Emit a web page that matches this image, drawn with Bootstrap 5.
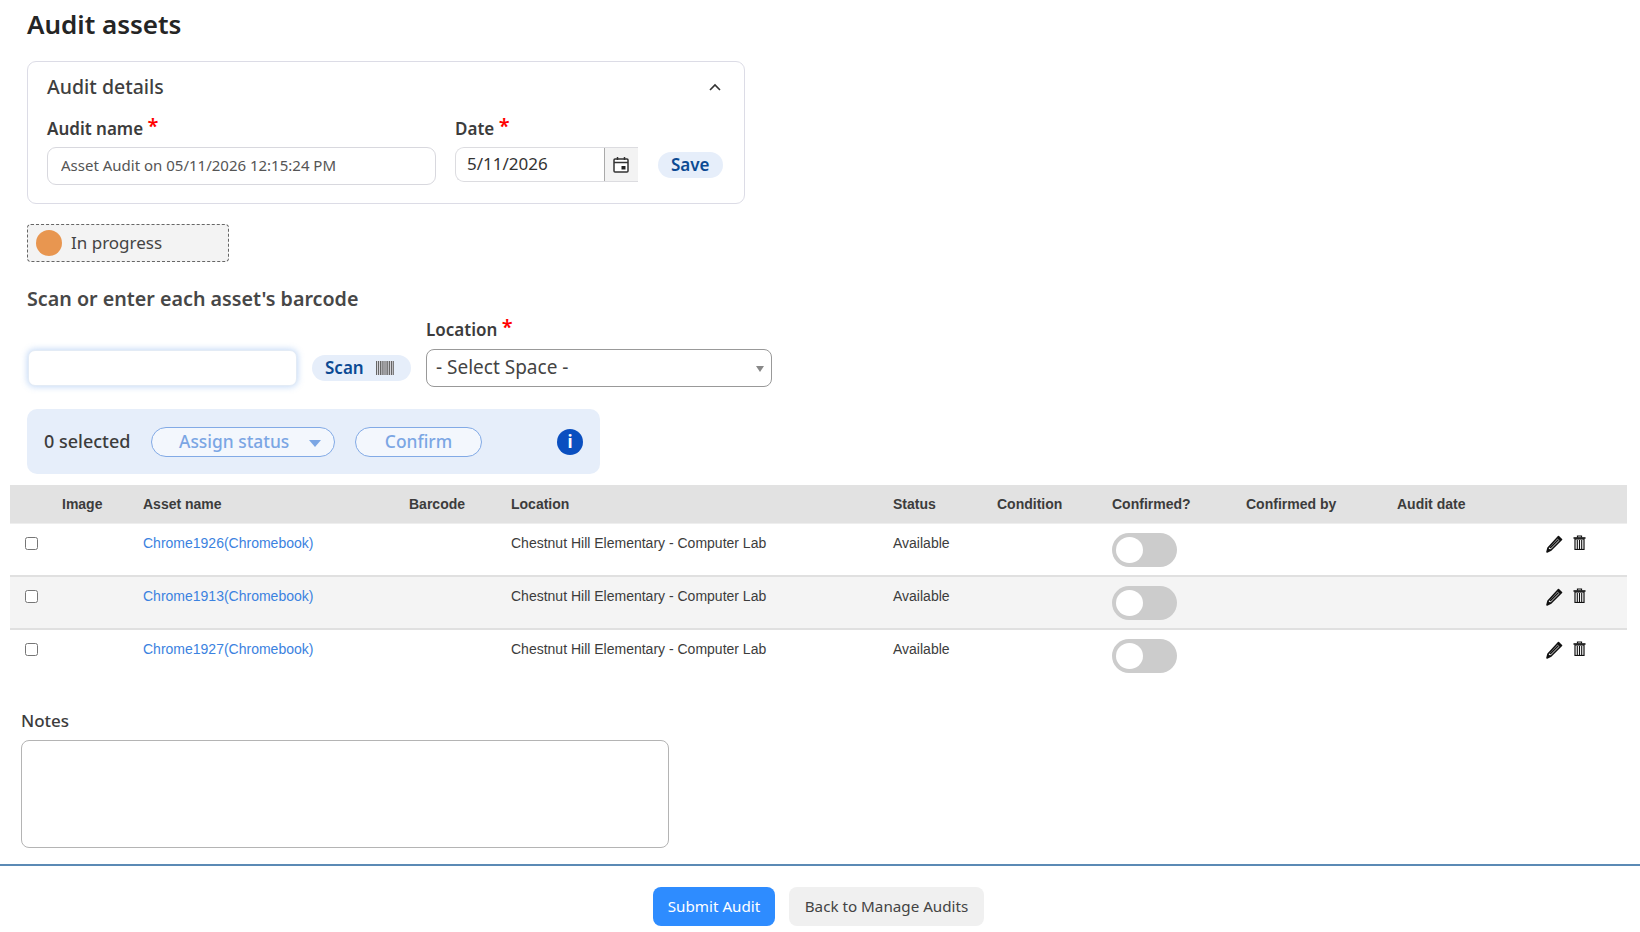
<!DOCTYPE html>
<html lang="en">
<head>
    <meta charset="UTF-8">
    <meta name="viewport" content="width=device-width, initial-scale=1.0">
    <title>Audit assets</title>
    <link href="https://cdn.jsdelivr.net/npm/bootstrap@5.3.0/dist/css/bootstrap.min.css" rel="stylesheet">
    <style>
        body { font-family: "Noto Sans", sans-serif; color: #3c3c3c; background: #fff; height: 932px; overflow: hidden; }
        .audit-top { padding: 0 27px; width: 800px; }
        .audit-title { font-size: 26px; font-weight: 600; line-height: 34px; margin: 7px 0 20px; color: #252525; }
        .details-box { width: 718px; height: 143px; border: 1px solid #dcdce6; border-radius: 9px; padding: 10px 19px 0; }
        .details-head { font-size: 19.5px; font-weight: 500; line-height: 30px; color: #3f3f3f; height: 30px; }
        .details-fields { margin-top: 15px; }
        .field-lbl { font-size: 17px; font-weight: 600; line-height: 24px; color: #3c3c3c; margin: 0; }
        .field-lbl-gap { margin-bottom: 6px; }
        .req { color: #f00; font-size: 20px; line-height: 16px; position: relative; top: -2px; }
        .name-field { width: 389px; }
        .name-input { height: 38px; border: 1px solid #d8d8de; border-radius: 9px; padding: 0 13px 2px; font-size: 15px; color: #555; font-family: inherit; }
        .date-field { width: 183px; margin-left: 19px; }
        .date-wrap { height: 35px; border: 1px solid #dcdce0; border-radius: 9px 0 0 9px; border-right: 0; display: flex; overflow: hidden; }
        .date-text { width: 149px; font-size: 17px; padding-left: 11px; line-height: 32px; color: #333; }
        .cal-btn { width: 34px; padding-right: 2px; background: #f3f3f3; border-left: 1px solid #aaa; display: flex; align-items: center; justify-content: center; }
        .pill-soft { background: #e6eefa; color: #0b4a93; font-size: 17px; font-weight: 600; border: 0; border-radius: 14px; height: 26px; line-height: 26px; padding: 0 13px; }
        .save-btn { margin-left: 20px; margin-bottom: 7px; }
        .status-chip { width: 202px; height: 38px; margin-top: 20px; border: 1px dashed #666; border-radius: 4px; background: #f3f3f3; padding-left: 8px; gap: 9px; font-size: 17px; color: #444; }
        .status-dot { width: 26px; height: 26px; border-radius: 50%; background: #e89650; }
        .scan-title { font-size: 19.7px; font-weight: 600; line-height: 26px; color: #474747; margin: 24px 0 0; }
        .scan-row { height: 75px; margin-bottom: 22px; }
        .scan-input { width: 269px; height: 36px; margin: 38px 15px 0 1px; border: 1px solid #e3ebf5; border-radius: 7px; box-shadow: 0 0 6px 1px rgba(90,150,230,.35); background: #fff; }
        .scan-btn { width: 99px; margin: 43px 15px 0 0; padding: 0 13px; display: flex; align-items: center; justify-content: space-between; }
        .scan-bars { margin-right: 4px; }
        .loc-field { width: 346px; }
        .loc-lbl { height: 37px; line-height: 36px; }
        .loc-select { height: 38px; border: 1px solid #999; border-radius: 8px; padding: 0 7px 2px 9px; font-size: 19px; color: #444; }
        .tri { width: 0; height: 0; border-left: 4px solid transparent; border-right: 4px solid transparent; border-top: 6px solid #888; position: relative; top: 2px; }
        .bulk-bar { width: 573px; height: 65px; background: #e6eefa; border-radius: 10px; padding: 0 17px; }
        .bulk-count { font-size: 18px; font-weight: 500; color: #3c3c3c; width: 107px; }
        .pill-line { height: 30px; border: 1px solid #82aae6; border-radius: 15px; background: #f3f7fd; color: #7ba6e4; font-size: 17.4px; font-weight: 500; line-height: 27px; }
        .pill-assign { width: 184px; padding: 0 13px 0 27px; margin-right: 20px; }
        .pill-confirm { width: 127px; text-align: center; }
        .tri-blue { border-top-color: #7ba6e4; border-left-width: 6px; border-right-width: 6px; border-top-width: 7px; }
        .info-dot { width: 26px; height: 26px; border-radius: 50%; background: #0a4fc0; color: #fff; font-weight: 700; font-size: 17px; line-height: 26px; text-align: center; margin-left: auto; }
        .audit-grid { width: 1617px; margin: 11px 0 0 10px; table-layout: fixed; font-family: "Liberation Sans", sans-serif; font-size: 14px; color: #3c3c3c; }
        .audit-grid th, .audit-grid td { padding: 0; border: 0; box-shadow: none; background: transparent; color: inherit; }
        .audit-grid th { height: 38px; padding-top: 2px; background: #e2e2e2; font-weight: 700; vertical-align: middle; border-bottom: 1px solid #eee; }
        .audit-grid td { height: 53px; vertical-align: top; padding-top: 10px; border-bottom: 2px solid #e0e0e0; line-height: 18px; }
        .audit-grid tbody tr:nth-child(2) td { background: #f4f4f4; }
        .audit-grid tbody tr:last-child td { border-bottom: 0; }
        .c-chk { width: 52px; padding-left: 15px !important; }
        .c-img { width: 81px; }
        .c-name { width: 266px; }
        .c-bar { width: 102px; }
        .c-loc { width: 382px; }
        .c-st { width: 104px; }
        .c-cond { width: 115px; }
        .c-conf { width: 134px; }
        .c-by { width: 151px; }
        .c-date { width: 143px; }
        .row-chk { width: 13px; height: 13px; display: block; margin: 3px 0 0; }
        .asset-link { color: #3b82e0; text-decoration: none; }
        .sw-off { width: 65px; height: 34px; margin-top: -1px; border-radius: 17px; background: #ccc; padding: 4px; }
        .sw-knob { width: 27px; height: 26px; border-radius: 50%; background: #fff; }
        .row-acts { gap: 10px; padding-left: 6px; padding-top: 1px; }
        .notes-wrap { padding-left: 21px; margin-top: 27px; }
        .notes-lbl { font-size: 17px; font-weight: 500; line-height: 24px; color: #3c3c3c; margin-bottom: 7px; display: block; }
        .notes-area { width: 648px; height: 108px; border: 1px solid #b4b4b4; border-radius: 8px; resize: none; }
        .foot-bar { border-top: 2px solid #5b8ab5; margin-top: 16px; padding: 21px 3px 0 0; gap: 14px; }
        .btn-go { background: #2e8cff; color: #fff; border: 0; border-radius: 8px; width: 122px; height: 39px; font-size: 15.2px; padding: 0; }
        .btn-back { background: #f0f0f0; color: #444; border: 0; border-radius: 8px; width: 195px; height: 39px; font-size: 15.2px; padding: 0; }
    </style>
</head>
<body>
    <div class="audit-top">
        <h1 class="audit-title">Audit assets</h1>

        <div class="details-box">
            <div class="details-head d-flex align-items-center justify-content-between">
                <span>Audit details</span>
                <svg class="me-1" width="12" height="8" viewBox="0 0 12 8"><path d="M1 7 L6 2 L11 7" fill="none" stroke="#333" stroke-width="1.6"/></svg>
            </div>
            <div class="d-flex details-fields">
                <div class="name-field">
                    <label class="field-lbl field-lbl-gap d-block">Audit name <span class="req">*</span></label>
                    <input class="form-control name-input" type="text" value="Asset Audit on 05/11/2026 12:15:24 PM">
                </div>
                <div class="date-field">
                    <label class="field-lbl field-lbl-gap d-block">Date <span class="req">*</span></label>
                    <div class="date-wrap">
                        <div class="date-text">5/11/2026</div>
                        <div class="cal-btn">
                            <svg width="16" height="17" viewBox="0 0 16 17"><rect x="1" y="3" width="14" height="13" rx="1" fill="#fff" stroke="#333" stroke-width="1.5"/><path d="M1 6.5H15" stroke="#333" stroke-width="1.5"/><path d="M4.5 1V4M11.5 1V4" stroke="#333" stroke-width="1.5"/><rect x="8.5" y="10" width="4" height="3.5" fill="#222"/></svg>
                        </div>
                    </div>
                </div>
                <button class="btn pill-soft align-self-end save-btn" type="button">Save</button>
            </div>
        </div>

        <div class="status-chip d-flex align-items-center">
            <span class="status-dot"></span>
            <span>In progress</span>
        </div>

        <h2 class="scan-title">Scan or enter each asset's barcode</h2>
        <div class="scan-row d-flex align-items-start">
            <input class="scan-input" type="text">
            <button class="pill-soft scan-btn" type="button">
                <span>Scan</span>
                <svg class="scan-bars" width="18" height="14" viewBox="0 0 18 14"><rect width="18" height="14" fill="#d4d4da"/><path d="M.5 0V14M2.5 0V14M4.5 0V14M6.2 0V14M8 0V14M10 0V14M11.7 0V14M13.5 0V14M15.5 0V14M17.3 0V14" stroke="#666" stroke-width="1"/></svg>
            </button>
            <div class="loc-field">
                <label class="field-lbl d-block loc-lbl">Location <span class="req">*</span></label>
                <div class="loc-select d-flex align-items-center justify-content-between">
                    <span>- Select Space -</span>
                    <span class="tri"></span>
                </div>
            </div>
        </div>

        <div class="bulk-bar d-flex align-items-center">
            <span class="bulk-count">0 selected</span>
            <div class="pill-line pill-assign d-flex align-items-center justify-content-between">
                <span>Assign status</span>
                <span class="tri tri-blue"></span>
            </div>
            <div class="pill-line pill-confirm">Confirm</div>
            <span class="info-dot">i</span>
        </div>
    </div>

    <table class="table audit-grid mb-0">
        <thead>
            <tr>
                <th class="c-chk"></th>
                <th class="c-img">Image</th>
                <th class="c-name">Asset name</th>
                <th class="c-bar">Barcode</th>
                <th class="c-loc">Location</th>
                <th class="c-st">Status</th>
                <th class="c-cond">Condition</th>
                <th class="c-conf">Confirmed?</th>
                <th class="c-by">Confirmed by</th>
                <th class="c-date">Audit date</th>
                <th></th>
            </tr>
        </thead>
        <tbody id="assetRows"></tbody>
    </table>

    <div class="notes-wrap">
        <label class="notes-lbl">Notes</label>
        <textarea class="form-control notes-area"></textarea>
    </div>

    <div class="foot-bar d-flex justify-content-center">
        <button class="btn btn-go" type="button">Submit Audit</button>
        <button class="btn btn-back" type="button">Back to Manage Audits</button>
    </div>

    <script>
        const assets = ['Chrome1926(Chromebook)', 'Chrome1913(Chromebook)', 'Chrome1927(Chromebook)'];
        const pencil = '<svg width="17" height="18" viewBox="0 0 17 18"><path d="M12.5 1.5 L15.5 4.5 L5 15 L1 17 L2 13 Z" fill="#fff" stroke="#111" stroke-width="1.6" stroke-linejoin="round"/><path d="M12.5 1.5 L15.5 4.5 L14 6 L11 3 Z M1 17 L2 13 L5 15 Z" fill="#111"/><path d="M4 13 L12.5 4.5" stroke="#111" stroke-width="1.6"/></svg>';
        const trash = '<svg width="13" height="15" viewBox="0 0 13 15"><path d="M0.5 3H12.5" stroke="#111" stroke-width="1.6"/><path d="M4.5 2.5V1H8.5V2.5" fill="none" stroke="#111" stroke-width="1.2"/><rect x="2" y="4" width="9" height="10.5" fill="#fff" stroke="#111" stroke-width="1.2"/><path d="M4.3 5V14M6.5 5V14M8.7 5V14" stroke="#111" stroke-width="1.1"/></svg>';

        document.getElementById('assetRows').innerHTML = assets.map(name => `
            <tr>
                <td class="c-chk"><input class="row-chk" type="checkbox"></td>
                <td></td>
                <td><a class="asset-link" href="#">${name}</a></td>
                <td></td>
                <td>Chestnut Hill Elementary - Computer Lab</td>
                <td>Available</td>
                <td></td>
                <td><div class="sw-off"><div class="sw-knob"></div></div></td>
                <td></td>
                <td></td>
                <td><div class="row-acts d-flex align-items-start">${pencil}${trash}</div></td>
            </tr>`).join('');
    </script>

    <script src="https://cdn.jsdelivr.net/npm/bootstrap@5.3.0/dist/js/bootstrap.bundle.min.js"></script>
</body>
</html>
